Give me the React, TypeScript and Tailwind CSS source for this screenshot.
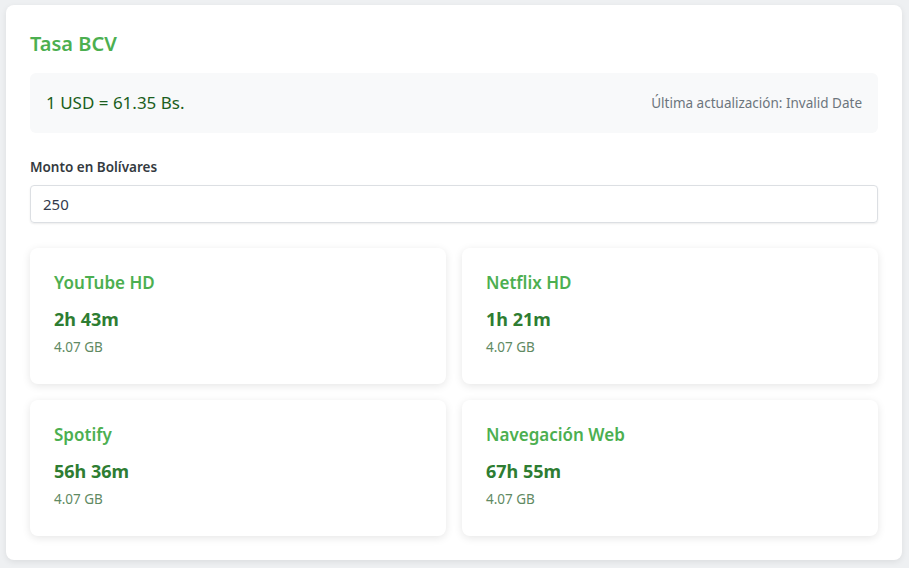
const plans = [
  { name: 'YouTube HD', time: '2h 43m', size: '4.07 GB' },
  { name: 'Netflix HD', time: '1h 21m', size: '4.07 GB' },
  { name: 'Spotify', time: '56h 36m', size: '4.07 GB' },
  { name: 'Navegación Web', time: '67h 55m', size: '4.07 GB' },
];

export default function App() {
  return (
    <div className="min-h-[568px] bg-[#eef0f2] pt-[5px] pl-[6px] pr-[7px] pb-[7px] font-['Noto_Sans',sans-serif]">
      <div className="bg-white rounded-lg shadow-[0_2px_6px_rgba(0,0,0,0.08)] px-6 pt-[28px] pb-6">
        <h1 className="text-[20px] leading-[22px] font-semibold text-[#4caf50]">Tasa BCV</h1>

        {/* Rate banner */}
        <div className="mt-[18px] h-[60px] bg-[#f8f9fa] rounded-md px-4 flex items-center justify-between">
          <span className="text-[17px] text-[#1b5e20]">1 USD = 61.35 Bs.</span>
          <span className="text-[13.5px] text-[#6c757d]">Última actualización: Invalid Date</span>
        </div>

        <label className="block mt-[25px] text-[13.5px] leading-[18px] font-semibold text-[#343a40]">
          Monto en Bolívares
        </label>
        <input
          defaultValue="250"
          className="mt-[9px] w-full h-[38px] px-3 text-[15px] text-[#333a4d] border border-[#dcdfe3] rounded-[4px] shadow-[0_1px_2px_rgba(0,0,0,0.08)] outline-none"
        />

        {/* Plans */}
        <div className="mt-[25px] grid grid-cols-2 gap-4">
          {plans.map((p) => (
            <div
              key={p.name}
              className="h-[136px] bg-white rounded-lg shadow-[0_2px_8px_rgba(0,0,0,0.1)] px-6 pt-[24px]"
            >
              <h3 className="text-[17px] leading-[22px] font-semibold text-[#4caf50]">{p.name}</h3>
              <p className="mt-[13px] text-[18px] leading-[24px] font-bold text-[#2e7d32]">{p.time}</p>
              <p className="mt-[7px] text-[13.5px] leading-[18px] text-[#5f8a63]">{p.size}</p>
            </div>
          ))}
        </div>
      </div>
    </div>
  );
}
